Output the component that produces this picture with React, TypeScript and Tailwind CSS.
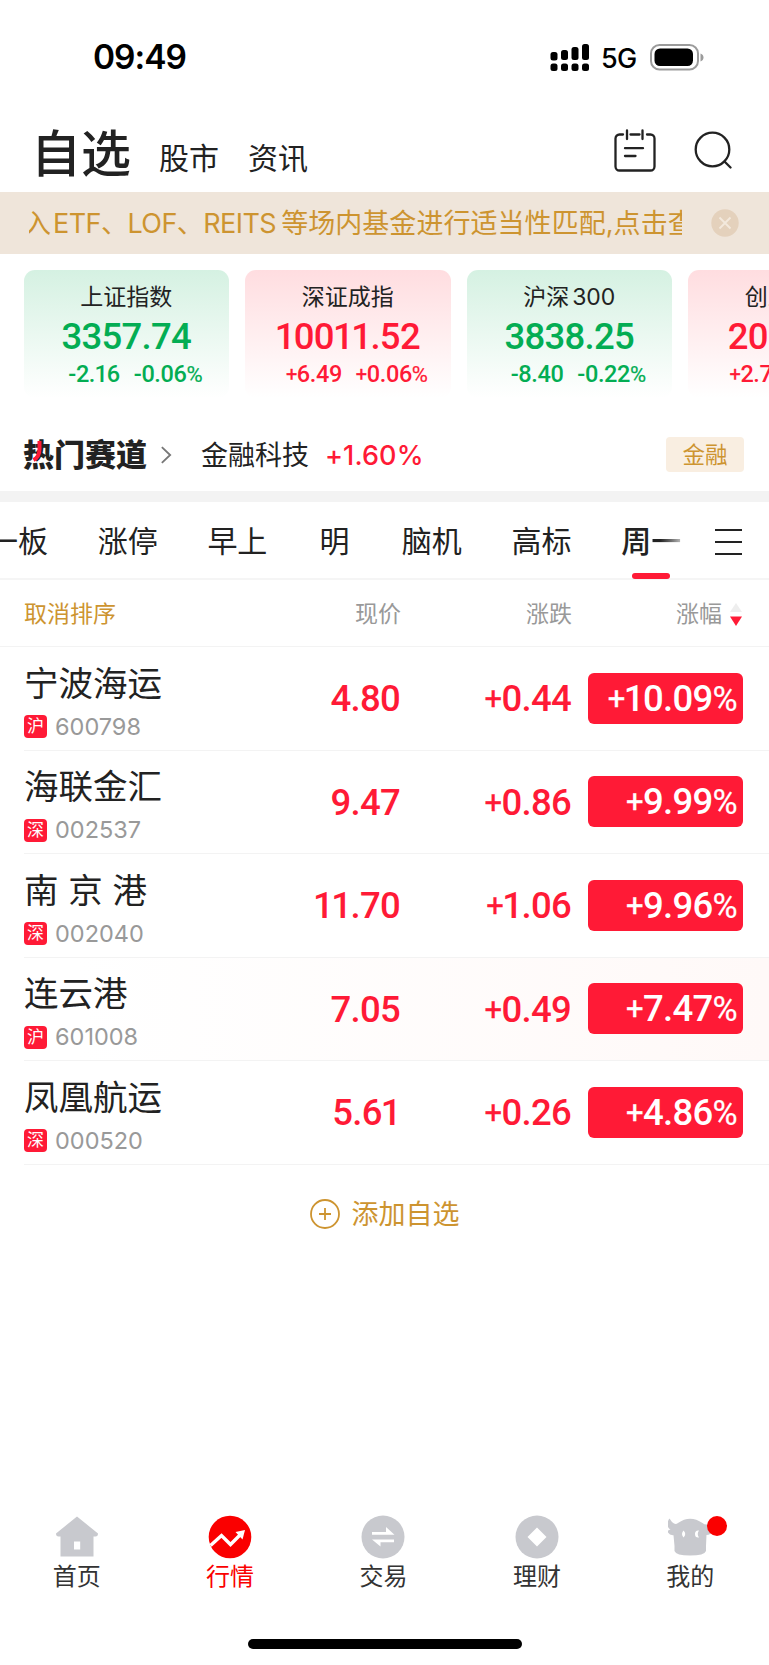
import React from "react";

type Trend = "up" | "down";

interface IndexCard {
  name: React.ReactNode;
  value: string;
  change: string;
  percent: string;
  trend: Trend;
}

interface Stock {
  name: string;
  market: string;
  code: string;
  price: string;
  change: string;
  percent: string;
  active?: boolean;
}

const indexes: IndexCard[] = [
  { name: "上证指数", value: "3357.74", change: "-2.16", percent: "-0.06%", trend: "down" },
  { name: "深证成指", value: "10011.52", change: "+6.49", percent: "+0.06%", trend: "up" },
  { name: <>沪深<span className="ml-[3px]">300</span></>, value: "3838.25", change: "-8.40", percent: "-0.22%", trend: "down" },
  { name: "创业板指", value: "2011.77", change: "+2.77", percent: "+0.14%", trend: "up" },
];

const groups = ["一板", "涨停", "早上", "明", "脑机", "高标"];

const stocks: Stock[] = [
  { name: "宁波海运", market: "沪", code: "600798", price: "4.80", change: "+0.44", percent: "+10.09%" },
  { name: "海联金汇", market: "深", code: "002537", price: "9.47", change: "+0.86", percent: "+9.99%" },
  { name: "南 京 港", market: "深", code: "002040", price: "11.70", change: "+1.06", percent: "+9.96%" },
  { name: "连云港", market: "沪", code: "601008", price: "7.05", change: "+0.49", percent: "+7.47%", active: true },
  { name: "凤凰航运", market: "深", code: "000520", price: "5.61", change: "+0.26", percent: "+4.86%" },
];

// Signs and percent marks are set smaller than the digits around them,
// and the digit 1 is narrower than the rest
const Figure: React.FC<{ text: string }> = ({ text }) => {
  const sign = text.startsWith("+") ? "+" : "";
  const percent = text.endsWith("%") ? "%" : "";
  const digits = text.slice(sign.length, text.length - percent.length);
  return (
    <>
      {sign && <span className="text-[0.85em] font-normal align-[0.06em] [-webkit-text-stroke:0.3px]">{sign}</span>}
      {digits.split("").map((digit, index) => (
        <span key={index} className={digit === "1" ? "-mx-[0.025em]" : ""}>{digit}</span>
      ))}
      {percent && <span className="text-[0.94em] font-normal [-webkit-text-stroke:0.2px]">{percent}</span>}
    </>
  );
};

const StatusBar: React.FC = () => (
  <div className="h-[115px] flex items-center justify-between pl-[93px] pr-[65px] text-black">
    <span className="pt-px text-[33.500px] leading-none font-semibold tracking-[-1px]">09:49</span>
    <div className="flex items-center">
      <svg width="40" height="28" viewBox="0 0 40 28">
        <rect x="0.5" y="8" width="7" height="8.500" rx="2.500" />
        <rect x="11" y="6" width="7" height="10" rx="2.500" />
        <rect x="21.500" y="3" width="7" height="13" rx="2.500" />
        <rect x="32" y="0" width="7" height="16" rx="2.500" />
        <rect x="0.5" y="19.500" width="7" height="7.500" rx="2.500" />
        <rect x="11" y="19.500" width="7" height="7.500" rx="2.500" />
        <rect x="21.500" y="19.500" width="7" height="7.500" rx="2.500" />
        <rect x="32" y="19.500" width="7" height="7.500" rx="2.500" />
      </svg>
      <span className="ml-[11px] w-[37px] text-[27px] leading-none font-medium tracking-[-0.8px] pt-0.5">5G</span>
      <svg className="ml-[12px]" width="54" height="28" viewBox="0 0 54 28">
        <rect x="1" y="1" width="47" height="24.500" rx="8.500" fill="none" stroke="#9b9b9b" strokeWidth="2" />
        <rect x="4.500" y="4.500" width="38.500" height="17.500" rx="5.500" />
        <path d="M50.500 9.500c2 .7 3 2.200 3 4s-1 3.300-3 4z" fill="#9b9b9b" />
      </svg>
    </div>
  </div>
);

const Header: React.FC = () => (
  <div className="h-[77px] flex items-center justify-between pl-[31px] pr-[37px] text-[#222]">
    <div className="flex items-center">
      <h1 className="text-[50px] leading-[50px] font-medium">自选</h1>
      <span className="ml-[28px] pt-[9px] text-[30px] leading-none">股市</span>
      <span className="ml-[29px] pt-[9px] text-[30px] leading-none">资讯</span>
    </div>
    <div className="flex items-center gap-[38px] pb-[7px]">
      <svg width="42" height="43" viewBox="0 0 42 43" fill="none" stroke="#222" strokeWidth="2.300" strokeLinecap="round">
        <path d="M9 5.500H5.500a4 4 0 0 0-4 4V37.500a4 4 0 0 0 4 4H36.500a4 4 0 0 0 4-4V9.500a4 4 0 0 0-4-4H33M16.500 5.500H25.500" />
        <path d="M13 1.500V10M28.500 1.500V10M11 19.200H29M11 27H21.500" />
      </svg>
      <svg width="38" height="38" viewBox="0 0 38 38" fill="none" stroke="#222" strokeWidth="2.300" strokeLinecap="round">
        <circle cx="18.500" cy="18.500" r="16.800" />
        <path d="M30.500 30.500l6 6" />
      </svg>
    </div>
  </div>
);

const Notice: React.FC = () => (
  <div className="h-[62px] flex items-center bg-[#efe5da] pl-[29px] pr-[30px]">
    <p className="w-[653px] overflow-hidden whitespace-nowrap pt-0.5 text-[27px] leading-[40px] text-[#cd9430]">
      <span className="-ml-[5px] mr-[2px]">入</span><span className="tracking-[-0.55px]">ETF、LOF、REITS</span><span className="ml-[5px] tracking-[0.05px]">等场内基金进行适当性匹配,点击查看</span>
    </p>
    <svg className="ml-auto" width="28" height="28" viewBox="0 0 28 28">
      <circle cx="14" cy="14" r="13.700" fill="#e4d1bc" />
      <path d="M8.500 8.500l11 11M19.500 8.500l-11 11" stroke="#f3e9dd" strokeWidth="1.800" />
    </svg>
  </div>
);

const IndexStrip: React.FC = () => (
  <div className="h-[164px] flex gap-[16px] overflow-hidden pl-[23.500px] pt-4">
    {indexes.map((item) => (
      <div
        key={item.value}
        className={`w-[205.500px] h-[128px] shrink-0 flex flex-col items-center rounded-[11px] bg-linear-to-b to-white ${
          item.trend === "up" ? "from-[#ffdde0] text-[#ff1a36]" : "from-[#d5f1e2] text-[#03ad53]"
        }`}
      >
        <span className="mt-[14px] text-[23px] leading-[26px] text-[#222]">{item.name}</span>
        <span className="mt-[5px] font-[Roboto] font-medium text-[36.500px] leading-[44px] tracking-[-0.7px]"><Figure text={item.value} /></span>
        <span className="mt-[1px] pl-[18px] flex gap-[14px] font-[Roboto] font-medium text-[23.500px] leading-[28px] tracking-[-0.4px] whitespace-nowrap">
          <span><Figure text={item.change} /></span>
          <span><Figure text={item.percent} /></span>
        </span>
      </div>
    ))}
  </div>
);

const HotTrack: React.FC = () => (
  <div className="h-[73px] flex items-center pl-[23px] pr-[25px]">
    <div className="relative">
      <h2 className="text-[31px] leading-[32px] font-black text-[#222]">热门赛道</h2>
      <svg className="absolute left-[9px] top-[2px]" width="12" height="21" viewBox="0 0 12 21">
        <path d="M7.500 0V8Q7.500 16 1.500 19" fill="none" stroke="#ff1a36" strokeWidth="4" />
      </svg>
    </div>
    <svg className="ml-[13px] mt-px" width="12" height="20" viewBox="0 0 13 20" fill="none" stroke="#777" strokeWidth="2">
      <path d="M2 1.500L11 10L2 18.500" />
    </svg>
    <span className="ml-[29px] pt-px text-[27px] leading-none text-[#222]">金融科技</span>
    <span className="ml-[16px] pt-[2px] text-[27px] leading-none font-medium tracking-[0.1px] text-[#ff1a36]">+1.60%</span>
    <span className="ml-auto w-[78px] h-[35px] rounded-[4px] bg-[#f9eee1] text-center text-[22.500px] leading-[36px] text-[#cd9430]">金融</span>
  </div>
);

const GroupTabs: React.FC = () => (
  <div className="h-[78px] flex items-center border-b-2 border-[#f5f5f5] text-[30px] leading-none text-[#222]">
    <div className="-ml-[12px] pt-0.5 flex items-center gap-[49.700px] whitespace-nowrap">
      {groups.map((group) => (
        <span key={group} className="min-w-[35px] text-center">{group}</span>
      ))}
      <span className="relative font-medium">
        周<span className="bg-linear-to-r from-[#222] from-30% to-[#bbb] bg-clip-text text-transparent">一</span>
        <i className="absolute left-[11px] top-[47px] w-[38px] h-[6px] rounded-full bg-[#ff1a36]"></i>
      </span>
    </div>
    <svg className="ml-[34px] mt-1" width="27" height="28" viewBox="0 0 27 28" stroke="#222" strokeWidth="2">
      <path d="M0 2H27M0 14H27M0 26H27" />
    </svg>
  </div>
);

const TableHead: React.FC = () => (
  <div className="h-[67px] flex items-center border-b border-[#f3f3f3] pl-6 pr-[26px] pt-[3px] text-[23px] leading-none text-[#999]">
    <span className="text-[#cd9430]">取消排序</span>
    <span className="ml-auto w-[46px]">现价</span>
    <span className="ml-[125px] w-[46px]">涨跌</span>
    <span className="ml-[104px] w-[46px]">涨幅</span>
    <svg className="ml-[7px]" width="14" height="24" viewBox="0 0 14 24">
      <path d="M7 0L13 9H1z" fill="#eee" />
      <path d="M1 13.500H13L7 23z" fill="#ff1a36" />
    </svg>
  </div>
);

const StockRow: React.FC<{ stock: Stock }> = ({ stock }) => (
  <div className={`pl-6 ${stock.active ? "bg-linear-to-r from-white from-10% to-[#fff9f8]" : ""}`}>
    <div className="h-[103.500px] flex items-center border-b border-[#f3f3f3] pr-[26px] font-[Roboto] font-medium text-[36.500px] leading-none text-[#ff1a36]">
      <div className="w-[200px] pt-[7px] font-[Inter,'Noto_Sans_CJK_SC',sans-serif] font-normal">
        <div className="text-[34.500px] leading-[40px] text-[#222] whitespace-nowrap">{stock.name}</div>
        <div className="mt-[10px] flex items-center">
          <span className="size-[23px] rounded-[4px] bg-[#ff1a36] text-center text-[17px] leading-[23px] text-white">{stock.market}</span>
          <span className="ml-[8px] text-[23.500px] leading-[26px] text-[#999]">{stock.code}</span>
        </div>
      </div>
      <span className="w-[176px] pt-0.5 text-right tracking-[-0.700px]"><Figure text={stock.price} /></span>
      <span className="w-[171px] pt-0.5 text-right tracking-[-0.700px]"><Figure text={stock.change} /></span>
      <span className="ml-auto w-[155px] h-[51px] rounded-[6px] bg-[#ff1a36] pr-[6px] text-right leading-[51px] tracking-[-0.700px] text-white">
        <Figure text={stock.percent} />
      </span>
    </div>
  </div>
);

const TabIcon: React.FC<{ name: string }> = ({ name }) => (
  <svg width="44" height="44" viewBox="0 0 44 44" fill="#c8c9ce">
    {name === "首页" && (
      <path fillRule="evenodd" d="M22 1.500L43 18.500Q43 21.500 40.500 21.500H38.500V41.500H5.500V21.500H3.500Q1 21.500 1 18.500zM19 26.500V34.500H25.200V26.500z" />
    )}
    {name === "行情" && (
      <>
        <circle cx="22" cy="22" r="21.300" fill="#fa0000" />
        <path d="M2.500 30.500L13.500 20.500L22.500 29.500L33 19" fill="none" stroke="#fff" strokeWidth="3.400" />
        <path d="M27.500 17L37 15L34.500 24.500z" fill="#fff" />
      </>
    )}
    {name === "交易" && (
      <>
        <circle cx="22" cy="22" r="21.500" />
        <path d="M11 17H25V12L33.500 19.700H11zM33 24.500H11L19.500 31.500V27.300H33z" fill="#fff" />
      </>
    )}
    {name === "理财" && (
      <>
        <circle cx="22" cy="22" r="21.500" />
        <path d="M22 12.500L31.500 22L22 31.500L12.500 22z" fill="#fff" />
      </>
    )}
    {name === "我的" && (
      <>
        <path d="M1.500 3.500C-2 8-0.500 13 2.500 14.500Q0 15 -0.500 16.500Q1 20.500 5.500 20.200L6.500 31V36Q8 40.500 22 40.500Q36.500 40.500 38 36V31L38.500 20Q43 20 44 16Q42 14.500 41 14.500Q45 12 43 4L39 9.500Q36 9.500 34.500 8Q22 -0.500 10 8Q8 9.500 6 8.500Q3.500 7 1.500 3.500z" />
        <path d="M15.500 15.500q3.500 3.500 0 7q-3-3.500 0-7zM31 15.500q-2.500 3.500 0 7q-4 .5-4-3.500t4-3.500z" fill="#fff" />
      </>
    )}
  </svg>
);

const TabBar: React.FC = () => (
  <nav className="grid w-[767px] grid-cols-5">
    {["首页", "行情", "交易", "理财", "我的"].map((name) => (
      <a key={name} className="flex flex-col items-center">
        <div className="relative">
          <TabIcon name={name} />
          {name === "我的" && <span className="absolute -right-[15px] top-[1px] size-[20px] rounded-full bg-[#fa0000]"></span>}
        </div>
        <span className={`mt-[5px] text-[24px] leading-[26px] ${name === "行情" ? "text-[#fa0000]" : "text-[#333]"}`}>{name}</span>
      </a>
    ))}
  </nav>
);

const App: React.FC = () => {
  return (
    <div className="w-[769px] h-[1665px] flex flex-col overflow-hidden bg-white font-[Inter,'Noto_Sans_CJK_SC',sans-serif]">
      <StatusBar />
      <Header />
      <Notice />
      <IndexStrip />
      <HotTrack />
      <div className="h-[11px] shrink-0 bg-[#f3f3f3]"></div>
      <GroupTabs />
      <TableHead />
      {stocks.map((stock) => (
        <StockRow key={stock.code} stock={stock} />
      ))}
      <button className="h-[99px] flex items-center justify-center gap-[12px] text-[27px] leading-none text-[#cd9430]">
        <svg width="30" height="30" viewBox="0 0 30 30" fill="none" stroke="#cd9430" strokeWidth="1.800">
          <circle cx="15" cy="15" r="14" />
          <path d="M9 15H21M15 9V21" />
        </svg>
        添加自选
      </button>
      <div className="mt-auto">
        <TabBar />
        <div className="mx-auto mt-[49px] mb-[16px] w-[274px] h-[10px] rounded-full bg-black"></div>
      </div>
    </div>
  );
};

export default App;
